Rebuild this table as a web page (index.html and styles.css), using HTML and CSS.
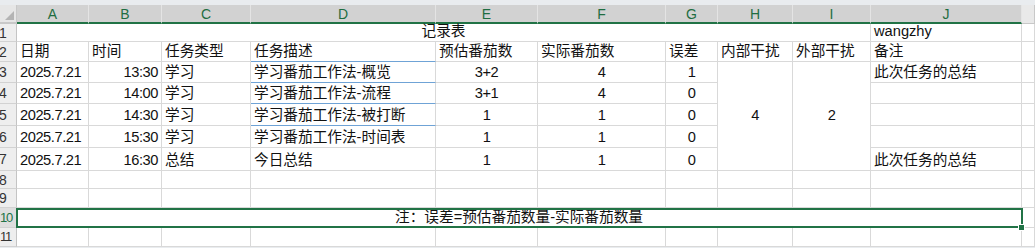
FILE: index.html
```html
<!DOCTYPE html>
<html lang="zh-CN">
<head>
<meta charset="utf-8">
<title>记录表</title>
<link rel="stylesheet" href="styles.css">
</head>
<body>
<div class="sheet">
  <div class="grid">
    <!-- column headers -->
    <div class="corner"><svg width="9" height="9" viewBox="0 0 9 9"><polygon points="9,0 9,9 0,9" fill="#b4b4b4"/></svg></div>
    <div class="ch sel">A</div><div class="ch sel">B</div><div class="ch sel">C</div><div class="ch sel">D</div><div class="ch sel">E</div>
    <div class="ch sel">F</div><div class="ch sel">G</div><div class="ch sel">H</div><div class="ch sel">I</div><div class="ch sel">J</div>
    <div class="ch"></div>

    <!-- row 1 -->
    <div class="rh">1</div>
    <div class="c center span9">记录表</div>
    <div class="c">wangzhy</div>
    <div class="c"></div>

    <!-- row 2 -->
    <div class="rh">2</div>
    <div class="c">日期</div><div class="c">时间</div><div class="c">任务类型</div><div class="c blue">任务描述</div>
    <div class="c">预估番茄数</div><div class="c">实际番茄数</div><div class="c">误差</div>
    <div class="c">内部干扰</div><div class="c">外部干扰</div><div class="c">备注</div>
    <div class="c"></div>

    <!-- row 3 -->
    <div class="rh">3</div>
    <div class="c num">2025.7.21</div><div class="c num right">13:30</div><div class="c">学习</div>
    <div class="c blue">学习番茄工作法-概览</div>
    <div class="c num center">3+2</div><div class="c num center">4</div><div class="c num center">1</div>
    <div class="c num center middle span5r">4</div>
    <div class="c num center middle span5r">2</div>
    <div class="c">此次任务的总结</div>
    <div class="c"></div>

    <!-- row 4 -->
    <div class="rh">4</div>
    <div class="c num">2025.7.21</div><div class="c num right">14:00</div><div class="c">学习</div>
    <div class="c blue">学习番茄工作法-流程</div>
    <div class="c num center">3+1</div><div class="c num center">4</div><div class="c num center">0</div>
    <div class="c"></div>
    <div class="c"></div>

    <!-- row 5 -->
    <div class="rh">5</div>
    <div class="c num">2025.7.21</div><div class="c num right">14:30</div><div class="c">学习</div>
    <div class="c blue">学习番茄工作法-被打断</div>
    <div class="c num center">1</div><div class="c num center">1</div><div class="c num center">0</div>
    <div class="c"></div>
    <div class="c"></div>

    <!-- row 6 -->
    <div class="rh">6</div>
    <div class="c num">2025.7.21</div><div class="c num right">15:30</div><div class="c">学习</div>
    <div class="c">学习番茄工作法-时间表</div>
    <div class="c num center">1</div><div class="c num center">1</div><div class="c num center">0</div>
    <div class="c"></div>
    <div class="c"></div>

    <!-- row 7 -->
    <div class="rh">7</div>
    <div class="c num">2025.7.21</div><div class="c num right">16:30</div><div class="c">总结</div>
    <div class="c">今日总结</div>
    <div class="c num center">1</div><div class="c num center">1</div><div class="c num center">0</div>
    <div class="c">此次任务的总结</div>
    <div class="c"></div>

    <!-- row 8 -->
    <div class="rh">8</div>
    <div class="c"></div><div class="c"></div><div class="c"></div><div class="c"></div><div class="c"></div>
    <div class="c"></div><div class="c"></div><div class="c"></div><div class="c"></div><div class="c"></div>
    <div class="c"></div>

    <!-- row 9 -->
    <div class="rh">9</div>
    <div class="c"></div><div class="c"></div><div class="c"></div><div class="c"></div><div class="c"></div>
    <div class="c"></div><div class="c"></div><div class="c"></div><div class="c"></div><div class="c"></div>
    <div class="c"></div>

    <!-- row 10 -->
    <div class="rh two sel">10</div>
    <div class="c center span10">注：误差=预估番茄数量-实际番茄数量</div>
    <div class="c"></div>

    <!-- row 11 -->
    <div class="rh two">11</div>
    <div class="c"></div><div class="c"></div><div class="c"></div><div class="c"></div><div class="c"></div>
    <div class="c"></div><div class="c"></div><div class="c"></div><div class="c"></div><div class="c"></div>
    <div class="c"></div>
  </div>
  <div class="selection"></div>
  <div class="handle"></div>
</div>
</body>
</html>
```

FILE: styles.css
```css
* { box-sizing: border-box; }

html, body {
  margin: 0;
  padding: 0;
  background: #ffffff;
  overflow: hidden;
}

body {
  font-family: "Liberation Sans", "Noto Sans CJK SC", sans-serif;
  font-size: 14.67px;
  color: #111111;
}

.sheet {
  position: relative;
  width: 1035px;
  height: 248px;
  padding-top: 5px;
  background: #e9ecef;
}

.grid {
  display: grid;
  grid-template-columns: 17px 72px 73px 89px 185px 102px 128px 52px 75px 78px 151px 1fr;
  grid-template-rows: 19px 18px 20px 21px 21px 22px 22px 23px 18px 19px 20px 19px;
  background: #ffffff;
}

.corner {
  background: #e6e6e6;
  border-right: 1px solid #c8c8c8;
  border-bottom: 2px solid #c8c8c8;
  display: flex;
  align-items: flex-end;
  justify-content: flex-end;
  padding: 0 2px 2px 0;
}

.ch {
  background: #e9e9e9;
  border-right: 1px solid #c8c8c8;
  border-bottom: 1px solid #c8c8c8;
  display: flex;
  align-items: center;
  justify-content: center;
  font-size: 14px;
  color: #444444;
  line-height: 16px;
}

.ch.sel {
  background: #d2d2d2;
  border-right-color: #e4e4e4;
  border-bottom: 2px solid #217346;
  color: #1f6d41;
}

.rh {
  background: #eeeeee;
  border-right: 1px solid #c4c4c4;
  border-bottom: 1px solid #d2d2d2;
  display: flex;
  align-items: center;
  justify-content: center;
  padding-right: 10px;
  overflow: hidden;
  font-size: 14px;
  color: #333333;
  line-height: 16px;
}

.rh.two {
  justify-content: flex-start;
  padding: 0;
  font-size: 13px;
  letter-spacing: -1.2px;
}

.rh.sel {
  background: #dedede;
  color: #217346;
}

.c {
  border-right: 1px solid #d9d9d9;
  border-bottom: 1px solid #d9d9d9;
  display: flex;
  align-items: flex-end;
  padding: 0 3px 1px 3px;
  white-space: nowrap;
  line-height: 17px;
  background: #ffffff;
}

.c.num { letter-spacing: -0.45px; }
.c.center { justify-content: center; }
.c.right { justify-content: flex-end; }
.c.middle { align-items: center; }
.c.blue { border-bottom-color: #6fa3d6; }

.span9 { grid-column: span 9; }
.span10 { grid-column: span 10; }
.span5r { grid-row: span 5; }

.selection {
  position: absolute;
  left: 16px;
  top: 208px;
  width: 1007px;
  height: 20px;
  border: 2px solid #217346;
  pointer-events: none;
}

.handle {
  position: absolute;
  left: 1018px;
  top: 224px;
  width: 7px;
  height: 7px;
  background: #217346;
  border: 1px solid #ffffff;
}
```
